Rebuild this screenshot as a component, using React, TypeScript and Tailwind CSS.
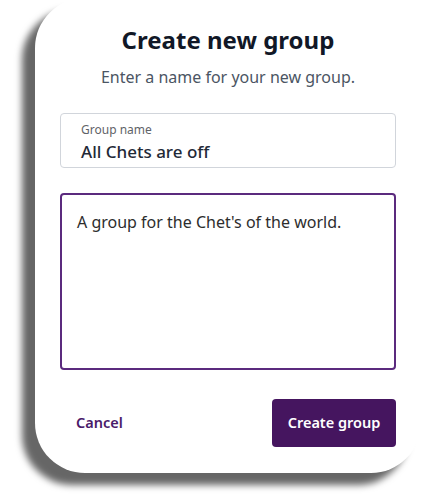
import React from "react";

export default function App() {
  return (
    <div
      className="w-[440px] h-[501px] bg-white overflow-hidden"
      style={{ fontFamily: '"Noto Sans", "Open Sans", sans-serif' }}
    >
      <div className="ml-[35px] -mt-[2px] w-[386px] bg-white rounded-[50px] shadow-[-13px_12px_7px_rgba(0,0,0,0.6)] px-[25px] pt-[27px] pb-[26px] flex flex-col">
        <h1 className="text-center text-[24px] leading-[30px] font-bold text-[#111827]">
          Create new group
        </h1>
        <p className="mt-[10px] text-center text-[16px] leading-[24px] text-[#4b5563]">
          Enter a name for your new group.
        </p>
        <div className="mt-[24px] h-[55px] border border-[#d1d5db] rounded-[4px] px-[20px] pt-[8px] flex flex-col">
          <span className="text-[12px] leading-[16px] text-[#5f6368]">Group name</span>
          <span className="mt-[3px] text-[17px] leading-[22px] font-medium text-[#1f2937]">
            All Chets are off
          </span>
        </div>
        <div className="mt-[25px] h-[177px] border-2 border-[#5b2a7e] rounded-[4px] px-[15px] pt-[15px]">
          <p className="text-[16px] leading-[24px] text-[#2d2d2d]">
            A group for the Chet's of the world.
          </p>
        </div>
        <div className="mt-[29px] flex items-center justify-between">
          <button className="px-[16px] h-[48px] text-[14.5px] font-semibold text-[#4a1a6a]">
            Cancel
          </button>
          <button className="w-[124px] h-[48px] rounded-[4px] bg-[#45155f] text-white text-[14.5px] font-semibold">
            Create group
          </button>
        </div>
      </div>
    </div>
  );
}
